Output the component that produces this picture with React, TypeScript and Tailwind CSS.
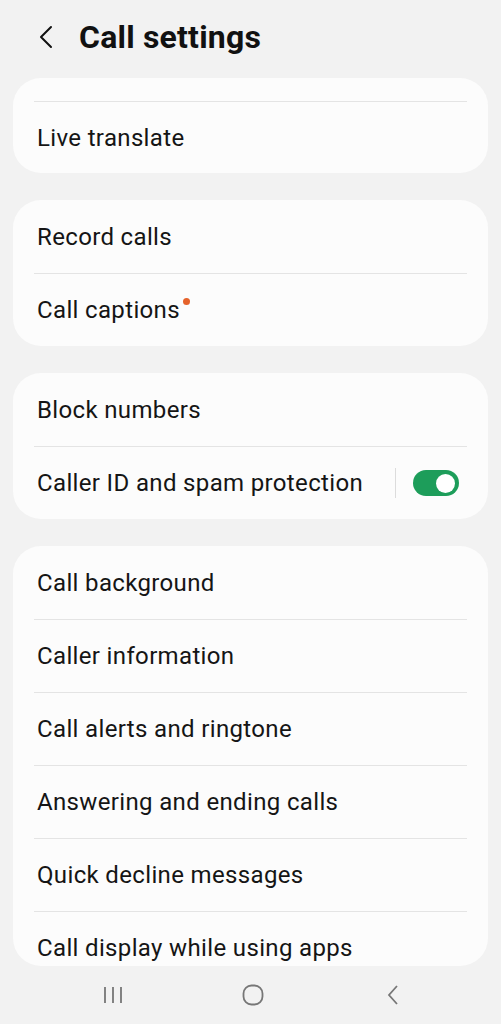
const font = { fontFamily: "Roboto, 'Noto Sans', sans-serif" };

function Row({
  label,
  dot = false,
  toggle = false,
}: {
  label: string;
  dot?: boolean;
  toggle?: boolean;
}) {
  return (
    <div className="mx-[21px] h-[73px] flex items-center border-t border-[#e4e4e4] first:border-t-0">
      <div className="flex items-center w-full px-[3px]">
        <span className="relative text-[24px] text-[#151515] tracking-[0.35px]">
          {label}
          {dot && (
            <span className="absolute -right-[10px] top-[6px] w-[7px] h-[7px] rounded-full bg-[#e5622b]" />
          )}
        </span>
        {toggle && (
          <div className="ml-auto flex items-center">
            <div className="w-px h-[30px] bg-[#dcdcdc] mr-[17px]" />
            <div className="w-[46px] h-[26px] rounded-full bg-[#1d9d5a] flex items-center justify-end pr-[4px] mr-[5px]">
              <div className="w-[19px] h-[19px] rounded-full bg-white" />
            </div>
          </div>
        )}
      </div>
    </div>
  );
}

export default function App() {
  return (
    <div className="w-[501px] h-[1024px] bg-[#f2f2f2] flex flex-col overflow-hidden" style={font}>
      <div className="h-[966px] flex flex-col overflow-hidden">
        <div className="h-[78px] flex items-center pl-[38px] pb-[4px] shrink-0">
          <svg width="16" height="24" viewBox="0 0 16 24">
            <path d="M13 2 L3 12 L13 22" fill="none" stroke="#111" strokeWidth="2" strokeLinecap="round" strokeLinejoin="round" />
          </svg>
          <h1 className="ml-[25px] text-[32px] font-bold text-[#111] tracking-[0.2px]">Call settings</h1>
        </div>

        <div className="mx-[13px] bg-[#fcfcfc] rounded-[28px] shrink-0">
          <div className="h-[23px]" />
          <div className="mx-[21px] h-[72px] flex items-center border-t border-[#e4e4e4]">
            <span className="px-[3px] text-[24px] text-[#151515] tracking-[0.35px]">Live translate</span>
          </div>
        </div>

        <div className="mx-[13px] mt-[27px] bg-[#fcfcfc] rounded-[28px] shrink-0">
          <Row label="Record calls" />
          <Row label="Call captions" dot />
        </div>

        <div className="mx-[13px] mt-[27px] bg-[#fcfcfc] rounded-[28px] shrink-0">
          <Row label="Block numbers" />
          <Row label="Caller ID and spam protection" toggle />
        </div>

        <div className="mx-[13px] mt-[27px] bg-[#fcfcfc] rounded-[28px] h-[420px] overflow-hidden shrink-0">
          <Row label="Call background" />
          <Row label="Caller information" />
          <Row label="Call alerts and ringtone" />
          <Row label="Answering and ending calls" />
          <Row label="Quick decline messages" />
          <Row label="Call display while using apps" />
        </div>
      </div>

      <div className="flex-1 flex items-center justify-center pl-[5px]">
        <div className="w-[140px] flex justify-center">
          <svg width="22" height="18" viewBox="0 0 22 18">
            <path d="M3 1v16M11 1v16M19 1v16" stroke="#777" strokeWidth="1.8" />
          </svg>
        </div>
        <div className="w-[140px] flex justify-center">
          <svg width="22" height="22" viewBox="0 0 22 22">
            <rect x="1.5" y="1.5" width="19" height="19" rx="8" fill="none" stroke="#777" strokeWidth="1.8" />
          </svg>
        </div>
        <div className="w-[140px] flex justify-center">
          <svg width="14" height="22" viewBox="0 0 14 22">
            <path d="M11 2 L3 11 L11 20" fill="none" stroke="#777" strokeWidth="1.8" />
          </svg>
        </div>
      </div>
    </div>
  );
}
